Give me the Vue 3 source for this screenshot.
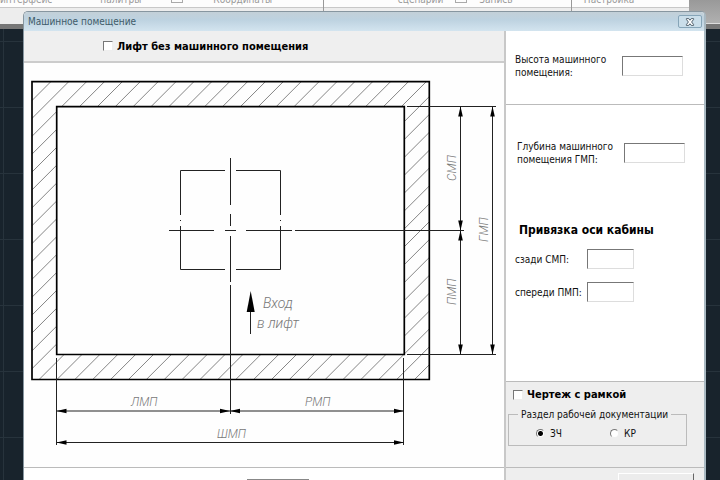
<script setup>
import { ref } from 'vue'

const noMachineRoom = ref(false)
const withFrame = ref(false)
const section = ref('zch')
const height = ref('')
const depth = ref('')
const axisBack = ref('')
const axisFront = ref('')

// 45° hatch: every line satisfies x + y = sum
const hatch = Array.from({ length: 38 }, (_, k) => {
  const sum = 132.5 + 17.88 * k
  return `M${sum - 381} 381L${sum - 80} 80`
}).join('')

const arrows = [
  [56.5, 411, 180], [230, 411, 0], [230, 411, 180], [404, 411, 0],
  [56.5, 442.5, 180], [404, 442.5, 0],
  [460.5, 106.5, -90], [460.5, 230.5, 90], [460.5, 230.5, -90], [460.5, 354.5, 90],
  [492.5, 106.5, -90], [492.5, 354.5, 90],
]
</script>

<template>
  <div class="desktop">
    <div class="ribbon">
      <div class="ribbon-main">
        <div class="group first"><span>интерфейс</span><span>палитры</span><i class="glyph"></i><span>Координаты</span></div>
        <div class="group second"><span>сценарий</span><i class="glyph"></i><span>Запись</span></div>
        <div class="group third"><span>Настройка</span></div>
      </div>
      <div class="ribbon-end"></div>
    </div>

    <section class="dialog" aria-labelledby="dialog-title">
      <header class="titlebar">
        <h1 id="dialog-title">Машинное помещение</h1>
        <button class="close" type="button" aria-label="Закрыть">
          <svg viewBox="0 0 12 10" width="10" height="8">
            <path d="M1.5 .8H4.4L6 2.8 7.6 .8H10.5V1.8L8 5l2.5 3.2v1H7.6L6 7.2 4.4 9.2H1.5v-1L4 5 1.5 1.8Z" fill="#fff" stroke="#4a5a66" stroke-width="1.2" />
          </svg>
        </button>
      </header>

      <div class="body">
        <main class="left">
          <label class="check top-check"><input v-model="noMachineRoom" type="checkbox"><span>Лифт без машинного помещения</span></label>
          <svg class="plan" viewBox="24 63 480 404">
            <defs>
              <clipPath id="walls">
                <path clip-rule="evenodd" d="M32 82H429V379H32ZM57 107V354H404V107Z" />
              </clipPath>
            </defs>
            <path :d="hatch" clip-path="url(#walls)" stroke="#777" stroke-width=".9" fill="none" />
            <g fill="none" stroke="#000" stroke-width="1.7">
              <path d="M32 81.7H429.3V379.5H32Z" />
              <path d="M56.7 106.7H404.3V354.5H56.7Z" />
            </g>
            <g fill="none" stroke="#222" stroke-width="1">
              <path d="M180.5 215V170.5H225M236 170.5H280.5V215M180.5 220v1M280.5 220v1M180.5 226V269.5H225M236 269.5H280.5V226" />
              <path d="M230.5 158V205M230.5 214V226M230.5 236V282M230.5 285V414" />
              <path d="M169 230.5H214M225 230.5H236M246 230.5H292M295 230.5H464" />
              <path d="M407 106.5H496M407 354.5H496M56.5 358V445M403.5 358V445" />
              <path d="M56.5 411H404M56.5 442.5H404M460.5 106.5V354.5M492.5 106.5V354.5M250.5 310V334" />
            </g>
            <path d="M250.7 291L254.7 312H246.7Z" />
            <path v-for="(a, i) in arrows" :key="i" d="M0 0L-10 -2.3V2.3Z" :transform="`translate(${a[0]} ${a[1]}) rotate(${a[2]})`" />
            <g class="lettering">
              <text x="131" y="406">ЛМП</text>
              <text x="305" y="406">РМП</text>
              <text x="217" y="438">ШМП</text>
              <text transform="translate(456 181) rotate(-90)">СМП</text>
              <text transform="translate(456 305) rotate(-90)">ПМП</text>
              <text transform="translate(488 242) rotate(-90)">ГМП</text>
              <text class="entry" x="263" y="308">Вход</text>
              <text class="entry" x="257" y="328">в лифт</text>
            </g>
          </svg>
          <div class="left-foot"><button type="button" class="edge-button" aria-label="OK"></button></div>
        </main>

        <aside class="right">
          <div class="panel room-height">
            <label for="height">Высота машинного помещения:</label>
            <input id="height" v-model="height" class="field" type="text">
          </div>
          <div class="panel room-depth">
            <div class="depth-row">
              <label for="depth">Глубина машинного помещения ГМП:</label>
              <input id="depth" v-model="depth" class="field" type="text">
            </div>
            <h2>Привязка оси кабины</h2>
            <div class="axis">
              <label for="back">сзади СМП:</label>
              <input id="back" v-model="axisBack" class="field" type="text">
              <label for="front">спереди ПМП:</label>
              <input id="front" v-model="axisFront" class="field" type="text">
            </div>
          </div>
          <div class="panel options">
            <label class="check"><input v-model="withFrame" type="checkbox"><span>Чертеж с рамкой</span></label>
            <fieldset>
              <legend>Раздел рабочей документации</legend>
              <label class="radio"><input v-model="section" type="radio" name="section" value="zch"><span>ЗЧ</span></label>
              <label class="radio"><input v-model="section" type="radio" name="section" value="kr"><span>КР</span></label>
            </fieldset>
          </div>
          <div class="right-foot"><button type="button" class="foot-button" aria-label="Отмена"></button></div>
        </aside>
      </div>
    </section>
  </div>
</template>

<style>
body {
  margin: 0;
  overflow: hidden;
}
</style>

<style scoped>
* {
  box-sizing: border-box;
}

.desktop {
  position: relative;
  height: 100vh;
  overflow: hidden;
  background-color: #18232c;
  background-image:
    linear-gradient(#27333c 1px, transparent 1px),
    linear-gradient(90deg, #27333c 1px, transparent 1px);
  background-size: 66px 66px;
  background-position: 3px 41px;
  font-family: "DejaVu Sans Condensed", "DejaVu Sans", sans-serif;
  font-size: 10px;
  line-height: 13px;
  color: #111;
}

.ribbon {
  display: flex;
  height: 29px;
  border-bottom: 5px solid #777;
  background: #ededed;
}

.ribbon-main {
  display: flex;
  flex: 1;
  min-width: 0;
}

.ribbon-end {
  width: 31px;
  background: linear-gradient(#999, #b0b0b0);
  border-bottom: 1px solid #ddd;
}

.group {
  display: flex;
  height: 12px;
  border-right: 1px solid #999;
  background: linear-gradient(#fdfdfd 7px, #c8c8c8 7px, #c8c8c8 8px, #ededed 8px);
  color: #999;
}

.group span,
.glyph {
  margin-top: -7px;
}

.glyph {
  width: 12px;
  height: 10px;
  border: 1px solid #aaa;
}

.first {
  width: 47%;
  gap: 30px;
}

.first span:first-child {
  margin-right: 18px;
}

.second {
  width: 36%;
  gap: 12px;
  padding-left: 74px;
}

.third {
  flex: 1;
  padding-left: 12px;
  border-right: 0;
}

.dialog {
  position: absolute;
  top: 11px;
  left: 23px;
  right: 14px;
  overflow: hidden;
  border: 1px solid #8796a0;
  border-right: 2px solid #a9b9c2;
  border-bottom: 0;
  border-radius: 5px 5px 0 0;
  background: #fff;
}

.titlebar {
  display: flex;
  align-items: center;
  justify-content: space-between;
  height: 19px;
  padding: 0 2px 0 4px;
  background: linear-gradient(#c3d0d8, #bdd2e0 40%, #d3e4ef);
}

h1 {
  margin: 0;
  font-size: 10px;
  font-weight: 400;
  color: #3e5b69;
}

.close {
  display: flex;
  align-items: center;
  justify-content: center;
  width: 24px;
  height: 13px;
  padding: 0;
  border: 1px solid #86a5b8;
  border-radius: 2px;
  background: #cadeea;
}

.body {
  display: grid;
  grid-template-columns: minmax(0, 1fr) 200px;
}

.left {
  display: flex;
  flex-direction: column;
}

.check {
  display: flex;
  align-items: center;
  gap: 4px;
  font-size: 11px;
  font-weight: 700;
  color: #000;
}

.check input {
  appearance: none;
  width: 10px;
  height: 10px;
  margin: 0;
  border: 1px solid #eee;
  border-top-color: #777;
  border-left-color: #777;
  background: #fff;
}

.check input:checked {
  background: #333;
}

.top-check {
  height: 32px;
  padding-left: 79px;
  border-bottom: 2px solid #ccc;
  background: #efefef;
}

.plan {
  display: block;
  width: 100%;
  height: auto;
  background: #fefefe;
}

.lettering {
  font-family: Roboto, "Liberation Sans", sans-serif;
  font-size: 12px;
  font-style: italic;
  font-weight: 300;
  fill: #777;
}

.entry {
  font-size: 14px;
}

.left-foot {
  display: flex;
  justify-content: center;
  height: 32px;
  padding: 11px 0 0 27px;
  border-top: 1px solid #bbb;
}

.edge-button {
  width: 62px;
  height: 20px;
  border: 1px solid #888;
  background: #eee;
}

.right {
  display: flex;
  flex-direction: column;
  border-left: 2px solid #c8c8c8;
}

.panel {
  border-bottom: 1px solid #bbb;
}

.field {
  appearance: none;
  width: 61px;
  height: 20px;
  padding: 2px;
  border: 1px solid #ddd;
  border-top-color: #777;
  border-left-color: #777;
  background: #fff;
  font: inherit;
}

.room-height {
  display: grid;
  grid-template-columns: 107px 61px;
  align-items: center;
  height: 74px;
  padding: 0 0 3px 9px;
}

.room-depth {
  height: 277px;
  padding: 35px 0 0 9px;
}

.depth-row {
  display: grid;
  grid-template-columns: 107px 61px;
  align-items: center;
  padding-left: 2px;
}

h2 {
  margin: 58px 0 12px 4px;
  font-size: 12px;
  line-height: 13px;
  color: #000;
}

.axis {
  display: grid;
  grid-template-columns: 72px 47px;
  row-gap: 13px;
  align-items: center;
}

.axis label {
  white-space: nowrap;
}

.axis .field {
  width: 47px;
}

.options {
  height: 86px;
  padding: 6px 17px 0 2px;
  background: #eee;
}

.options .check {
  padding-left: 5px;
}

fieldset {
  display: grid;
  grid-template-columns: 74px 1fr;
  height: 38px;
  margin: 7px 0 0;
  padding: 6px 0 0 27px;
  border: 1px solid #bbb;
}

legend {
  margin-left: -18px;
  padding: 0 3px;
  white-space: nowrap;
}

.radio {
  display: flex;
  align-items: center;
  gap: 5px;
  height: 13px;
}

.radio input {
  appearance: none;
  width: 9px;
  height: 9px;
  margin: 0;
  border: 1px solid #eee;
  border-top-color: #777;
  border-left-color: #777;
  border-radius: 50%;
  background: #fff;
}

.radio input:checked {
  background: radial-gradient(circle, #000 2px, #fff 3px);
}

.right-foot {
  flex: 1;
  display: flex;
  justify-content: flex-end;
  padding: 5px 10px 0;
  background: #eee;
}

.foot-button {
  width: 76px;
  height: 22px;
  border: 1px solid #fff;
  border-right-color: #666;
  border-bottom-color: #666;
  background: #ececec;
}
</style>
